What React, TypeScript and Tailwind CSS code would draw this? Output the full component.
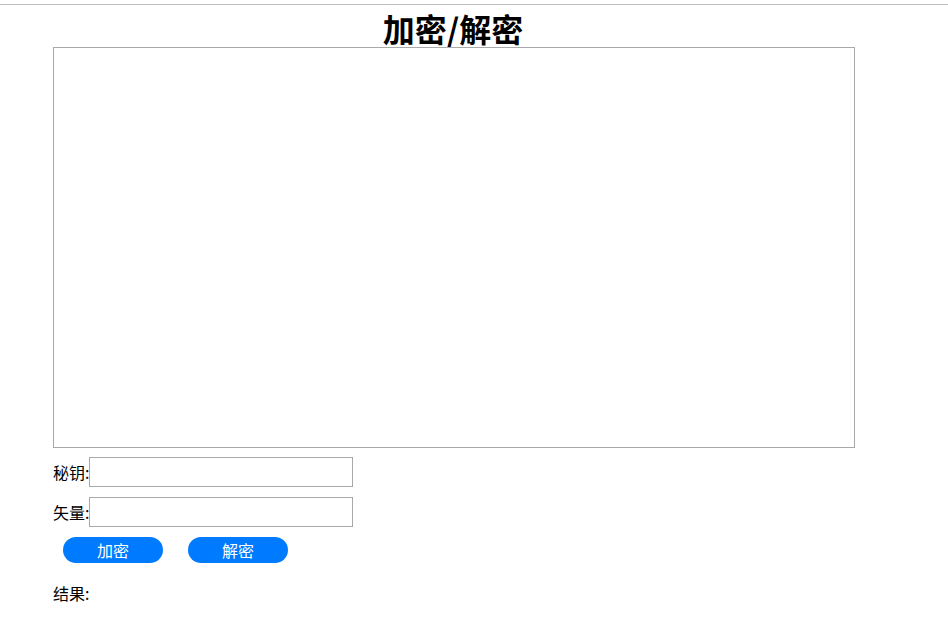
import { useState } from 'react'

const font = { fontFamily: '"Noto Sans CJK SC", "Microsoft YaHei", sans-serif' }

export default function App() {
  const [text, setText] = useState('')
  const [key, setKey] = useState('')
  const [iv, setIv] = useState('')

  return (
    <div className="min-h-[640px] bg-white text-black text-base" style={font}>
      {/* top rule */}
      <div className="pt-1">
        <div className="h-px bg-[#bdbdbd]" />
      </div>

      <div className="ml-[53px] w-[802px] flex flex-col">
        <h1 className="text-[32px] leading-[37px] font-bold text-center mt-[5px] -ml-[2px]">加密/解密</h1>

        <textarea
          value={text}
          onChange={e => setText(e.target.value)}
          className="w-[802px] h-[401px] border border-[#a9a9a9] resize-none outline-none block"
        />

        <div className="flex items-center mt-[9px] h-[30px] leading-none">
          <span>秘钥:</span>
          <input value={key} onChange={e => setKey(e.target.value)}
            className="w-[264px] h-[30px] border border-[#a9a9a9] outline-none" />
        </div>

        <div className="flex items-center mt-[10px] h-[30px] leading-none">
          <span>矢量:</span>
          <input value={iv} onChange={e => setIv(e.target.value)}
            className="w-[264px] h-[30px] border border-[#a9a9a9] outline-none" />
        </div>

        <div className="flex items-center gap-[25px] ml-[10px] mt-[10px]">
          <button className="w-[100px] h-[26px] rounded-full bg-[#007bff] text-white text-base leading-none">加密</button>
          <button className="w-[100px] h-[26px] rounded-full bg-[#007bff] text-white text-base leading-none">解密</button>
        </div>

        <div className="mt-[20px] leading-[20px]">结果:</div>
      </div>
    </div>
  )
}
